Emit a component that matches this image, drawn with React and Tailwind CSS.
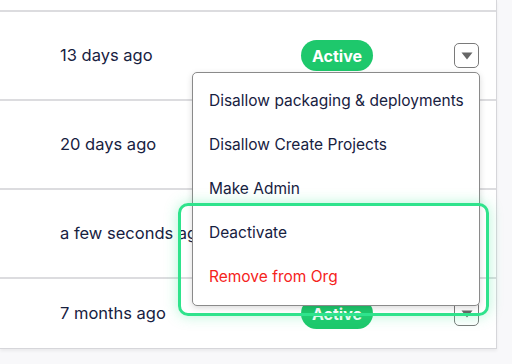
import React from 'react';

const rows = [
  { when: '13 days ago', h: 'h-[89px]' },
  { when: '20 days ago', h: 'h-[89px]' },
  { when: 'a few seconds ago', h: 'h-[89px]' },
  { when: '7 months ago', h: 'h-[69px]' },
];

const menuItems = [
  { label: 'Disallow packaging & deployments' },
  { label: 'Disallow Create Projects' },
  { label: 'Make Admin' },
  { label: 'Deactivate' },
  { label: 'Remove from Org', danger: true },
];

function DropButton() {
  return (
    <button className="w-[25px] h-[25px] rounded-[5px] border-[1.5px] border-[#7a7a7a] bg-white flex items-center justify-center">
      <svg width="12" height="8" viewBox="0 0 12 8">
        <path d="M0.5 0.5 H11.5 L6 7.5 Z" fill="#666" />
      </svg>
    </button>
  );
}

export default function App() {
  return (
    <div className="relative w-[512px] h-[364px] overflow-hidden bg-[#f8f8fa] text-[#17213f]" style={{ fontFamily: 'Inter, "Noto Sans", sans-serif' }}>
      <div className="w-[497px] bg-white border-r border-b border-[#d6d6da] shadow-[0_2px_3px_rgba(0,0,0,0.06)]">
        <div className="h-[12px] border-b-2 border-[#dcdcdf]" />
        {rows.map((r, i) => (
          <div key={i} className={`${r.h} flex items-center ${i < rows.length - 1 ? 'border-b-2 border-[#dcdcdf]' : ''}`}>
            <div className="w-[301px] pl-[60px] text-[16.5px]">{r.when}</div>
            <span className="w-[72px] h-[31px] rounded-full bg-[#1ec86c] text-white font-bold text-[16px] flex items-center justify-center">Active</span>
            <div className="ml-auto mr-[17px]">
              <DropButton />
            </div>
          </div>
        ))}
      </div>

      {/* dropdown menu */}
      <div className="absolute left-[192px] top-[72px] w-[288px] bg-white border border-[#8a8a8a] rounded-[5px] shadow-[0_2px_6px_rgba(0,0,0,0.15)] py-[6px]">
        {menuItems.map((m) => (
          <div key={m.label} className={`h-[44px] flex items-center pl-[16px] text-[15.5px] ${m.danger ? 'text-[#f5231c]' : 'text-[#17213f]'}`}>
            {m.label}
          </div>
        ))}
      </div>

      {/* highlight annotation */}
      <div className="absolute left-[178px] top-[203px] w-[311px] h-[113px] border-[3px] border-[#2fe38c] rounded-[10px] shadow-[0_0_14px_rgba(47,227,140,0.35)]" />
    </div>
  );
}
